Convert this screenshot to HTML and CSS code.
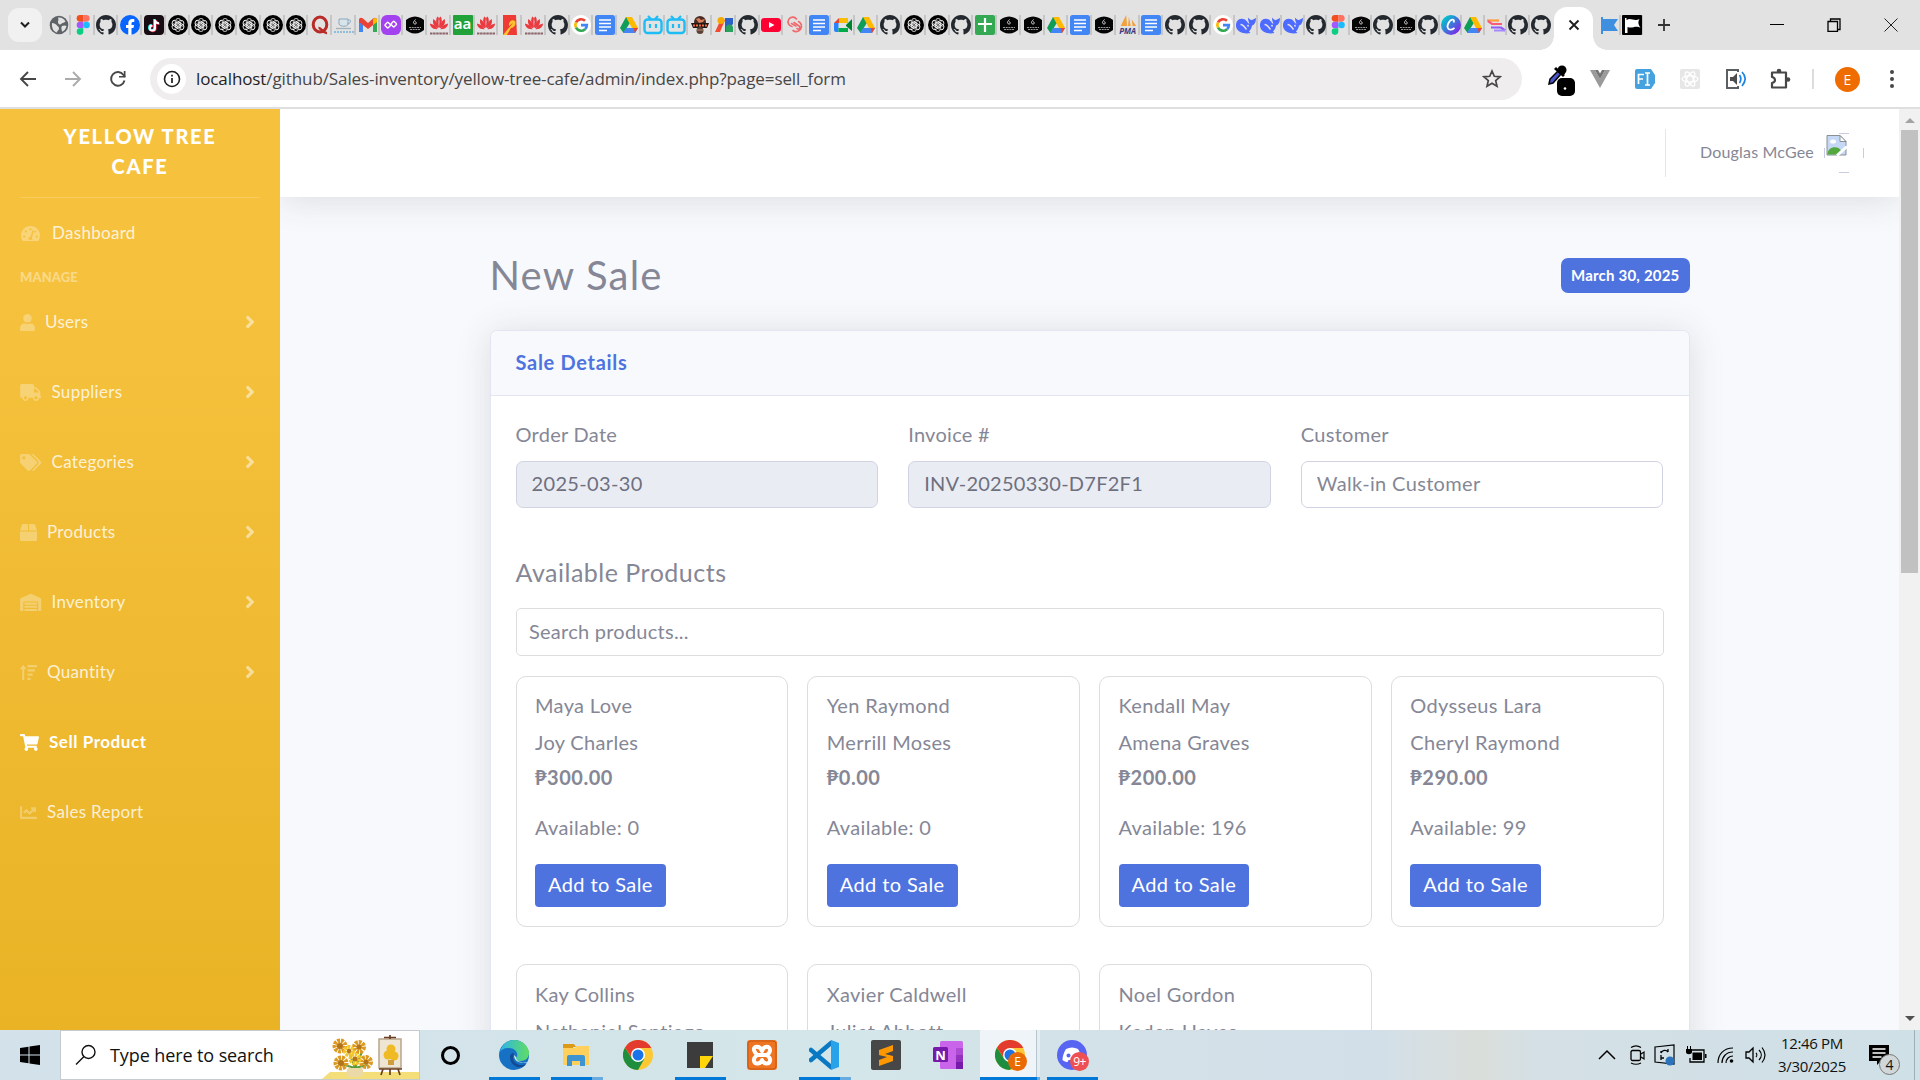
FILE: index.html
```html
<!DOCTYPE html>
<html lang="en">
<head>
<meta charset="utf-8">
<title>New Sale</title>
<link rel="stylesheet" href="styles.css">
</head>
<body>
<svg class="defs" aria-hidden="true">
  <symbol id="github" viewBox="0 0 16 16"><path fill="#24292f" d="M8 0C3.58 0 0 3.58 0 8c0 3.54 2.29 6.53 5.47 7.59.4.07.55-.17.55-.38 0-.19-.01-.82-.01-1.49-2.01.37-2.53-.49-2.69-.94-.09-.23-.48-.94-.82-1.13-.28-.15-.68-.52-.01-.53.63-.01 1.08.58 1.23.82.72 1.21 1.87.87 2.33.66.07-.52.28-.87.51-1.07-1.78-.2-3.64-.89-3.64-3.95 0-.87.31-1.59.82-2.15-.08-.2-.36-1.02.08-2.12 0 0 .67-.21 2.2.82.64-.18 1.32-.27 2-.27s1.36.09 2 .27c1.53-1.04 2.2-.82 2.2-.82.44 1.1.16 1.92.08 2.12.51.56.82 1.27.82 2.15 0 3.07-1.87 3.75-3.65 3.95.29.25.54.73.54 1.48 0 1.07-.01 1.93-.01 2.2 0 .21.15.46.55.38A8.01 8.01 0 0 0 16 8c0-4.42-3.58-8-8-8z"/></symbol>
  <symbol id="globe" viewBox="0 0 20 20"><circle cx="10" cy="10" r="9.300" fill="#5f6368"/><path fill="#e2e2e2" d="M3 8c2 0 4 1 5 2.500s2 1 2 3-2 2-2 4C5 17 2.500 13.500 3 8zM9 2.500c3-.5 6 1 7.500 4-1 1.500-3 1-4.500 2.500s-3-.5-3-2 1-1.500 0-4.500zM13 11c2-1 3.500-.5 4.500 0-.5 3-2.500 5-4.500 5.800 0-2-1.500-4 0-5.800z"/></symbol>
  <symbol id="figma" viewBox="0 0 20 20"><path fill="#f24e1e" d="M7 0h3.300v6.700H7a3.300 3.300 0 0 1 0-6.700z"/><path fill="#ff7262" d="M10.300 0h3a3.300 3.300 0 0 1 0 6.700h-3z"/><path fill="#a259ff" d="M7 6.700h3.300v6.600H7a3.300 3.300 0 0 1 0-6.600z"/><circle cx="13.500" cy="10" r="3.300" fill="#1abcfe"/><path fill="#0acf83" d="M7 13.300h3.300v3.300A3.300 3.300 0 1 1 7 13.300z"/></symbol>
  <symbol id="facebook" viewBox="0 0 20 20"><circle cx="10" cy="10" r="10" fill="#0866ff"/><path fill="#fff" d="M8.300 20v-7H6v-3h2.300V8.500C8.300 5.500 9.700 4 12.500 4c.6 0 1.400.1 1.800.2V7h-1.200c-1.200 0-1.600.5-1.600 1.700V10H14l-.5 3h-2v7z"/></symbol>
  <symbol id="tiktok" viewBox="0 0 20 20"><rect width="20" height="20" rx="4" fill="#170c14"/><g fill="none" stroke-width="2"><path stroke="#25f4ee" d="M10.200 4v8.500A2.600 2.600 0 1 1 7.500 10M10.200 4c0 2 1.500 3.700 4 3.700"/><path stroke="#fe2c55" d="M11.600 5v8.500A2.600 2.600 0 1 1 9 11M11.600 5c0 2 1.500 3.700 4 3.700"/><path stroke="#fff" d="M11 4.500V13a2.600 2.600 0 1 1-2.700-2.600M11 4.500c0 2 1.500 3.700 4 3.700"/></g></symbol>
  <symbol id="gpt" viewBox="0 0 20 20"><circle cx="10" cy="10" r="10" fill="#000"/><g fill="none" stroke="#fff" stroke-width=".9"><path id="petal" d="M7.300 11.500V6.400c0-3.200 4.300-3.700 5.300-1.200M9 9.200l4.500-2.500"/><use href="#petal" transform="rotate(60 10 10)"/><use href="#petal" transform="rotate(120 10 10)"/><use href="#petal" transform="rotate(180 10 10)"/><use href="#petal" transform="rotate(240 10 10)"/><use href="#petal" transform="rotate(300 10 10)"/></g></symbol>
  <symbol id="quora" viewBox="0 0 20 20"><ellipse cx="10" cy="9.500" rx="6.800" ry="7.500" fill="none" stroke="#b92b27" stroke-width="3"/><path d="M8.500 13c3-.5 4 5.500 8.500 5" fill="none" stroke="#b92b27" stroke-width="2.500"/></symbol>
  <symbol id="java" viewBox="0 0 20 20"><path d="M5 4h9v5c0 3-8 3-9 0zM14 5c4-1 3 4-1 4" fill="#d9e3ea" stroke="#8aa9bf"/><path d="M2 13.500h15" stroke="#a3b1bc" stroke-width="1.300"/><path d="M0 17h20" stroke="#72b3dc" stroke-width="1.600" stroke-dasharray="2 1"/></symbol>
  <symbol id="gmail" viewBox="0 0 20 20"><path fill="#4285f4" d="M1 5v12h4V9z"/><path fill="#34a853" d="M15 9v8h4V5z"/><path fill="#ea4335" d="M1 5c0-2 2-3 4-1.500l5 4.500 5-4.500C17 2 19 3 19 5v2l-9 7-9-7z"/><path fill="#fbbc04" d="M15 4c2-2 4-1 4 1v2l-4 3z"/></symbol>
  <symbol id="purple" viewBox="0 0 20 20"><rect width="20" height="20" rx="6" fill="#a243ef"/><g fill="none" stroke="#fff" stroke-width="1.400"><rect x="4.700" y="8" width="4.500" height="4.500" rx="1" transform="rotate(45 7 10)"/><rect x="10.700" y="7" width="4.500" height="4.500" rx="1" transform="rotate(45 13 9)"/></g></symbol>
  <symbol id="badge" viewBox="0 0 20 20"><path d="M4 3c4-2 8-2 12 0l3 2v10l-3 2c-4 2-8 2-12 0l-3-2V5z" fill="#050505"/><path d="M10.500 4.500c-2 2-3 4-.5 4.500 2 0 1.500-2 0-2.500" stroke="#ddd" fill="none"/><path d="M4 12.500h12M5 14.500h10" stroke="#999" stroke-dasharray="2 .7"/></symbol>
  <symbol id="huawei" viewBox="0 0 20 20"><g fill="#ea3a40"><path d="M9.700 13C6 9 7 3 8.500 1.500c2 1 2.500 6 1.200 11.500zM10.300 13c3.700-4 2.700-10 1.200-11.500-2 1-2.500 6-1.200 11.500z"/><path d="M9 13.500C4 11 3.500 7 4.300 4 7 5.500 9 9 9 13.500zM11 13.500c5-2.500 5.500-6.500 4.700-9.500C13 5.500 11 9 11 13.500z"/><path d="M8.500 14.200C3 14.500 1 11 1 8.500c3 .5 6 2.500 7.500 5.700zM11.500 14.200c5.500.3 7.500-3.200 7.500-5.700-3 .5-6 2.500-7.500 5.700z"/></g><path d="M1 18.500h18" stroke="#8a6468" stroke-width="2" stroke-dasharray="2.500 .6"/></symbol>
  <symbol id="wave" viewBox="0 0 20 20"><path fill="#ee3b33" d="M3 0h13l1 20H3z"/><path fill="#f9c22e" d="M3 20 13 8l-4 3c-1-4 3-7 6-5 2 4-2 7-4 7l-4 7z"/></symbol>
  <symbol id="google" viewBox="0 0 20 20"><circle cx="10" cy="10" r="10" fill="#fff"/><g fill="none" stroke-width="2.700"><path stroke="#ea4335" d="M5 7.300A5.800 5.800 0 0 1 14 5.800"/><path stroke="#fbbc05" d="M5 12.700a5.800 5.800 0 0 1 0-5.400"/><path stroke="#34a853" d="M5 12.700a5.800 5.800 0 0 0 9 1.500"/><path stroke="#4285f4" d="M10 10.200h5.800c0 1.800-.7 3-1.800 4"/></g></symbol>
  <symbol id="docs" viewBox="0 0 20 20"><rect width="20" height="20" rx="2.500" fill="#4285f4"/><path d="M4 5h12M4 8.500h12M4 12h12M4 15.500h8" stroke="#fff" stroke-width="1.700"/></symbol>
  <symbol id="drive" viewBox="0 0 20 20"><path fill="#0f9d58" d="M7 2h3l1.500 5L4.500 18 1 13z"/><path fill="#ffba00" d="M7 2h6l6 11h-6z"/><path fill="#4285f4" d="M7 13h12l-3 5H4z"/><path fill="#ea4335" d="m14.500 13 4.500 0-3 5z"/></symbol>
  <symbol id="bili" viewBox="0 0 20 20"><rect x="1.500" y="4.500" width="17" height="13.500" rx="3" fill="none" stroke="#1dbcf5" stroke-width="2.400"/><path d="m5 1 3 3M15 1l-3 3M7 9v4M13 9v4" stroke="#1dbcf5" stroke-width="2.200"/></symbol>
  <symbol id="ninja" viewBox="0 0 20 20"><circle cx="10" cy="7" r="6" fill="#4b2a21"/><path fill="#d9825c" d="m6 4 3-1 2 2 4-1-2 3-4 1z"/><path d="M1 8h18l-2 5H3z" fill="#201817"/><path d="M3 10.500h14" stroke="#f07040" stroke-width="1.800" stroke-dasharray="2 1"/><circle cx="10" cy="15.500" r="3.500" fill="#5b4035"/><path d="M7 15h6" stroke="#b98c7a"/></symbol>
  <symbol id="xshape" viewBox="0 0 20 20"><path fill="#f34b32" d="M1 17 7 4l4 1-5 12z"/><circle cx="7" cy="5.500" r="3.500" fill="#f7a900"/><path fill="#2a62c9" d="M11 3h8v6l-3 3 3 5h-8z"/><path fill="#29a15c" d="M12 13a3 3 0 0 1 7 0v4h-7z"/></symbol>
  <symbol id="youtube" viewBox="0 0 20 20"><rect y="3" width="20" height="14" rx="3.500" fill="#f03"/><path fill="#fff" d="m8 7 5.500 3L8 13z"/></symbol>
  <symbol id="swirl" viewBox="0 0 20 20"><g fill="none" stroke="#f1686b" stroke-width="1.600" stroke-linecap="round"><path d="M11 11 6.500 8.500M7 11.500a4.700 4.700 0 1 1 4.500-7.500"/><path d="m9 7.500 5 3.500c2 1.500 0 4-2 2.500M13.500 6.500a5.300 5.300 0 1 1-5.500 9"/></g></symbol>
  <symbol id="meet" viewBox="0 0 20 20"><path fill="#ea4335" d="m1 8 5-5v5z"/><path fill="#fbbc04" d="M6 3h9v5H6z"/><path fill="#2684fc" d="M1 8h4.500v9H3a2 2 0 0 1-2-2z"/><path fill="#00ac47" d="M5.500 13H15v4H5.500z"/><path fill="#00832d" d="m13 10 6-6v12l-6-5z"/></symbol>
  <symbol id="sheet" viewBox="0 0 20 20"><rect width="20" height="20" rx="2" fill="#34a853"/><path d="M10 3v14M3 9h14" stroke="#fff" stroke-width="2.200"/></symbol>
  <symbol id="sails" viewBox="0 0 20 12"><path fill="#f3a13c" d="M8 0 9 12H2zM11 2l2 10h-3zM14 5l5 7h-4z"/></symbol>
  <symbol id="whale" viewBox="0 0 20 20"><path fill="#4d6bfe" d="M0 9c1-5 5-6 9-4.500 2 1.500 3 4 4.500 4.500C13 7 12 6 12 2.500c1.500 2 3 2.500 4 2.500l4-2c0 4-1.500 7-4 7.500-.5 3-1.500 4.500-3 6l1.500 1.500C8 19.500-1 17 0 9z"/><path d="M4.500 9.500c2.500 0 4 2 6 5M11.500 10l1 1.500" stroke="#e2e2e2" stroke-width="1.400" fill="none"/></symbol>
  <linearGradient id="cg" x1="0" y1="0" x2="1" y2="1"><stop offset=".15" stop-color="#00c4cc"/><stop offset=".85" stop-color="#7d2ae8"/></linearGradient>
  <symbol id="canva" viewBox="0 0 20 20"><circle cx="10" cy="10" r="10" fill="url(#cg)"/><path fill="none" stroke="#fff" stroke-width="1.800" d="M12.500 7.500C14.500 4 10 3 7.500 8S8 17 13.500 13"/></symbol>
  <symbol id="stripes" viewBox="0 0 20 20"><path fill="none" stroke-width="2.200" d="M1 5.500h12" stroke="#ff9c3a"/><path fill="none" stroke-width="2.200" d="M2 6l4 3h10" stroke="#fb5b77"/><path fill="none" stroke-width="2.200" d="M5 12.500h10l4 3" stroke="#8e5bf5"/><path d="M8 15.500h11" fill="none" stroke-width="2" stroke="#a58bff"/></symbol>
  <symbol id="flagb" viewBox="0 0 20 20"><path fill="#3f8fe0" d="M2 2h2v2h15l-4 6 4 6H4v3H2z"/></symbol>
  <symbol id="flagk" viewBox="0 0 20 20"><rect width="20" height="20" rx="1" fill="#000"/><path fill="#fff" d="M3 3h1.500v2c5-3 7 2 13-1-2 4-1 5 1 9-5-3-8 1-13-1v6H3z"/></symbol>

  <symbol id="dash" viewBox="0 0 576 512"><path fill-rule="evenodd" d="M288 32C129 32 0 161 0 320c0 53 14 102 39 145 6 10 16 15 28 15h442c12 0 22-5 28-15 25-43 39-92 39-145C576 161 447 32 288 32zm0 64a32 32 0 1 1 0 64 32 32 0 0 1 0-64zM96 384a32 32 0 1 1 0-64 32 32 0 0 1 0 64zm48-160a32 32 0 1 1 0-64 32 32 0 0 1 0 64zm248-37-66 199c16 14 26 38 14 62H226c-18-52 18-96 62-96l60-180c10-24 48-12 44 15zM432 224c-10 0-20-5-26-13l10-30c14-14 48 0 48 11a32 32 0 0 1-32 32zm48 160a32 32 0 1 1 0-64 32 32 0 0 1 0 64z"/></symbol>
  <symbol id="user" viewBox="0 0 448 512"><path d="M224 256c70.7 0 128-57.3 128-128S294.7 0 224 0 96 57.3 96 128s57.3 128 128 128zm89.6 32h-16.7c-22.2 10.2-46.9 16-72.9 16s-50.6-5.8-72.9-16h-16.7C60.2 288 0 348.2 0 422.4V464c0 26.5 21.5 48 48 48h352c26.5 0 48-21.5 48-48v-41.6c0-74.2-60.2-134.4-134.4-134.4z"/></symbol>
  <symbol id="truck" viewBox="0 0 640 512"><path d="M624 352h-16V243.900c0-12.700-5.100-24.900-14.100-33.900L494 110.100c-9-9-21.200-14.100-33.900-14.100H416V48c0-26.500-21.500-48-48-48H48C21.500 0 0 21.500 0 48v320c0 26.500 21.500 48 48 48h16c0 53 43 96 96 96s96-43 96-96h128c0 53 43 96 96 96s96-43 96-96h48c8.800 0 16-7.200 16-16v-32c0-8.800-7.200-16-16-16zM160 464c-26.500 0-48-21.500-48-48s21.500-48 48-48 48 21.500 48 48-21.500 48-48 48zm320 0c-26.500 0-48-21.500-48-48s21.500-48 48-48 48 21.500 48 48-21.500 48-48 48zm80-208H416V144h44.100l99.900 99.900V256z"/></symbol>
  <symbol id="tags" viewBox="0 0 640 512"><path d="M497.941 225.941L286.059 14.059A48 48 0 0 0 252.118 0H48C21.490 0 0 21.490 0 48v204.118a48 48 0 0 0 14.059 33.941l211.882 211.882c18.744 18.745 49.136 18.746 67.882 0l204.118-204.118c18.745-18.745 18.745-49.137 0-67.882zM112 160c-26.510 0-48-21.490-48-48s21.490-48 48-48 48 21.490 48 48-21.490 48-48 48zm513.941 133.823L421.823 497.941c-18.745 18.745-49.137 18.745-67.882 0l-.36-.36L527.640 323.522c16.999-16.999 26.360-39.600 26.360-63.640s-9.362-46.641-26.360-63.640L331.397 0h48.721a48 48 0 0 1 33.941 14.059l211.882 211.882c18.745 18.745 18.745 49.137 0 67.882z"/></symbol>
  <symbol id="box" viewBox="0 0 512 512"><path d="M509.500 184.600L458.900 32.800C452.400 13.200 434.100 0 413.400 0H272v192h238.700c-.4-2.500-.4-5-1.200-7.400zM240 0H98.600c-20.700 0-39 13.200-45.500 32.800L2.500 184.600c-.8 2.400-.8 4.900-1.200 7.400H240V0zM0 224v240c0 26.500 21.500 48 48 48h416c26.500 0 48-21.500 48-48V224H0z"/></symbol>
  <symbol id="warehouse" viewBox="0 0 640 512"><path d="M504 352H136.400c-4.400 0-8 3.600-8 8l-.1 48c0 4.400 3.600 8 8 8H504c4.400 0 8-3.600 8-8v-48c0-4.400-3.600-8-8-8zm0 96H136.100c-4.400 0-8 3.600-8 8l-.1 48c0 4.400 3.600 8 8 8h368c4.400 0 8-3.600 8-8v-48c0-4.400-3.600-8-8-8zm0-192H136.600c-4.400 0-8 3.600-8 8l-.1 48c0 4.400 3.600 8 8 8H504c4.400 0 8-3.600 8-8v-48c0-4.400-3.600-8-8-8zm106.500-139L338.400 3.700a48.150 48.150 0 0 0-36.900 0L29.500 117C11.700 124.500 0 141.900 0 161.300V504c0 4.400 3.600 8 8 8h80c4.400 0 8-3.600 8-8V256c0-17.600 14.600-32 32.600-32h382.800c18 0 32.600 14.400 32.600 32v248c0 4.400 3.600 8 8 8h80c4.400 0 8-3.600 8-8V161.300c0-19.400-11.700-36.800-29.500-44.300z"/></symbol>
  <symbol id="sort" viewBox="0 0 512 512"><path d="M16 160h48v304c0 9 7 16 16 16h32c9 0 16-7 16-16V160h48c14 0 21-17 11-27l-80-96c-6-7-16-7-22 0L5 133c-10 10-3 27 11 27zM240 32h256c9 0 16 7 16 16v32c0 9-7 16-16 16H240c-9 0-16-7-16-16V48c0-9 7-16 16-16zM240 160h192c9 0 16 7 16 16v32c0 9-7 16-16 16H240c-9 0-16-7-16-16v-32c0-9 7-16 16-16zM240 288h128c9 0 16 7 16 16v32c0 9-7 16-16 16H240c-9 0-16-7-16-16v-32c0-9 7-16 16-16zM240 416h64c9 0 16 7 16 16v32c0 9-7 16-16 16h-64c-9 0-16-7-16-16v-32c0-9 7-16 16-16z"/></symbol>
  <symbol id="cart" viewBox="0 0 576 512"><path d="M528.120 301.319l47.273-208C578.806 78.301 567.391 64 551.990 64H159.208l-9.166-44.810C147.758 8.021 137.930 0 126.529 0H24C10.745 0 0 10.745 0 24v16c0 13.255 10.745 24 24 24h69.883l70.248 343.435C147.325 417.100 136 435.222 136 456c0 30.928 25.072 56 56 56s56-25.072 56-56c0-15.674-6.447-29.835-16.824-40h209.647C430.447 426.165 424 440.326 424 456c0 30.928 25.072 56 56 56s56-25.072 56-56c0-22.172-12.888-41.332-31.579-50.405l5.517-24.276c3.413-15.018-8.002-29.319-23.403-29.319H218.117l-6.545-32h293.145c11.206 0 20.920-7.754 23.403-18.681z"/></symbol>
  <symbol id="chart" viewBox="0 0 512 512"><path d="M496 384H64V80c0-8.840-7.160-16-16-16H16C7.160 64 0 71.160 0 80v336c0 17.670 14.330 32 32 32h464c8.840 0 16-7.160 16-16v-32c0-8.840-7.160-16-16-16zM464 96H345.940c-21.380 0-32.090 25.850-16.970 40.970l32.400 32.400L288 242.750l-73.370-73.370c-12.500-12.500-32.760-12.500-45.250 0l-68.690 68.690c-6.250 6.250-6.250 16.380 0 22.630l22.620 22.620c6.250 6.250 16.380 6.250 22.630 0L192 237.250l73.370 73.370c12.500 12.500 32.760 12.500 45.250 0l96-96 32.400 32.400c15.120 15.120 40.970 4.410 40.970-16.970V112c.01-8.840-7.150-16-15.990-16z"/></symbol>
  <symbol id="angle" viewBox="0 0 256 512"><path d="M224.300 273l-136 136c-9.400 9.400-24.600 9.400-33.900 0l-22.600-22.600c-9.400-9.400-9.400-24.600 0-33.900l96.400-96.400-96.400-96.400c-9.400-9.400-9.400-24.600 0-33.900L54.300 103c9.400-9.400 24.600-9.400 33.900 0l136 136c9.500 9.400 9.500 24.600.1 34z"/></symbol>
  <symbol id="chrome" viewBox="0 0 30 30"><circle cx="15" cy="15" r="15" fill="#fcc934"/><path fill="#1e8e3e" d="M2 7.500A15 15 0 0 0 15 30l6.500-11.500-12.500 0z"/><path fill="#e33b2e" d="M2 7.500 9 18 15 8h13.300A15 15 0 0 0 2 7.500z"/><circle cx="15" cy="15" r="7" fill="#fff"/><circle cx="15" cy="15" r="5.500" fill="#1a73e8"/></symbol>
</svg>

<header class="tabstrip">
  <button class="tab-search" aria-label="Search tabs"><svg width="12" height="8" viewBox="0 0 12 8"><path d="m2 1.500 4 4 4-4" fill="none" stroke="#1f1f1f" stroke-width="2"/></svg></button>
  <div class="tabs tabs-wide" id="tabs-wide"></div>
  <div class="tabs tabs-narrow" id="tabs-narrow"></div>
  <div class="tab-active"><svg width="12" height="12" viewBox="0 0 12 12"><path d="m1.500 1.500 9 9m0-9-9 9" stroke="#1f1f1f" stroke-width="1.900"/></svg></div>
  <div class="tabs tabs-narrow" id="tabs-after"></div>
  <button class="tab-new" aria-label="New tab"><svg width="14" height="14" viewBox="0 0 14 14"><path d="M7 1v12M1 7h12" stroke="#333" stroke-width="1.800"/></svg></button>
  <div class="window-controls">
    <svg width="14" height="14" viewBox="0 0 14 14"><path d="M0 6.500h14" stroke="#000"/></svg>
    <svg width="14" height="14" viewBox="0 0 14 14"><path d="M1 3.500h9.500v10H1zM3.500 3V1H13v10.500h-2" fill="none" stroke="#000" stroke-width="1.300"/></svg>
    <svg width="14" height="14" viewBox="0 0 14 14"><path d="m.5.500 13 13m0-13-13 13" stroke="#222"/></svg>
  </div>
</header>

<div class="toolbar">
  <div class="nav-buttons">
    <svg width="18" height="18" viewBox="0 0 18 18"><path d="M17 9H2m7-7L2 9l7 7" fill="none" stroke="#474747" stroke-width="1.900"/></svg>
    <svg width="18" height="18" viewBox="0 0 18 18"><path d="M1 9h15M9 2l7 7-7 7" fill="none" stroke="#ababab" stroke-width="1.900"/></svg>
    <svg width="18" height="18" viewBox="0 0 18 18"><path d="M15.500 10.500A6.800 6.800 0 1 1 14.500 5L16 7" fill="none" stroke="#474747" stroke-width="1.900"/><path d="M16.500 1v6.500H10V6h4.800V1z" fill="#474747"/></svg>
  </div>
  <div class="address">
    <span class="site-info"><svg width="18" height="18" viewBox="0 0 18 18"><circle cx="9" cy="9" r="7.500" fill="none" stroke="#1f1f1f" stroke-width="1.600"/><path d="M9 8v5M9 4.800v1.800" stroke="#1f1f1f" stroke-width="1.700"/></svg></span>
    <span class="url"><b>localhost</b>/github/Sales-inventory/yellow-tree-cafe/admin/index.php?page=sell_form</span>
    <svg class="star" width="20" height="20" viewBox="0 0 20 20"><path d="m10 2 2.300 5.300 5.700.5-4.300 3.800 1.300 5.600-5-3-5 3 1.300-5.600L2 7.800l5.700-.5z" fill="none" stroke="#474747" stroke-width="1.700"/></svg>
  </div>
  <div class="extensions">
    <svg width="30" height="30" viewBox="0 0 30 30"><path fill="#4a55c8" stroke="#000" stroke-width="1.500" d="m4 20 1-5 8-8 3 3-8 9z"/><path d="m10 4 9 8" stroke="#000" stroke-width="3"/><circle cx="17" cy="6" r="4.500" fill="#000"/><rect x="12" y="14" width="18" height="18" rx="5" fill="#000"/><circle cx="20" cy="24.500" r="1.300" fill="#fff"/></svg>
    <svg width="22" height="22" viewBox="0 0 22 22"><path fill="#9a9a9a" d="M1 2h5l5 9 5-9h5L11 20z"/><path fill="#737373" d="M6 2h3l2 3.500L13 2h3l-5 9z"/></svg>
    <svg width="22" height="22" viewBox="0 0 22 22"><path fill="#45a2df" d="M3 1h14l4 6v8l-4 6H3a2 2 0 0 1-2-2V3a2 2 0 0 1 2-2z"/><path d="M4.500 16V6.500H10M4.500 11H9M11 5h5M13.500 5v12M11 17h5" fill="none" stroke="#fff" stroke-width="1.700"/></svg>
    <svg width="22" height="22" viewBox="0 0 22 22"><rect x="1" y="1" width="20" height="20" rx="2" fill="#e6e6e6"/><g fill="none" stroke="#fff" stroke-width="1.300"><ellipse cx="11" cy="11" rx="8" ry="3.200"/><ellipse cx="11" cy="11" rx="8" ry="3.200" transform="rotate(60 11 11)"/><ellipse cx="11" cy="11" rx="8" ry="3.200" transform="rotate(120 11 11)"/></g></svg>
    <svg width="22" height="22" viewBox="0 0 22 22"><path d="M14 4V2H3v18h11v-2" fill="none" stroke="#5a5f63" stroke-width="2"/><path fill="#4d4d4d" d="M6 9h3l4-4v12l-4-4H6z"/><path d="M15.500 7c2 3 2 5 0 8M18 4c4 4 4 9 0 14" fill="none" stroke="#1a82e2" stroke-width="1.700"/></svg>
    <svg width="22" height="22" viewBox="0 0 22 22"><path d="M3 4.500h14v15H3V15c4-1 4-5 0-6z" fill="none" stroke="#474747" stroke-width="2.200" stroke-linejoin="round"/><circle cx="10" cy="3" r="2.300" fill="#474747"/><circle cx="19" cy="11.500" r="2.300" fill="#474747"/></svg>
  </div>
  <span class="toolbar-divider"></span>
  <span class="profile">E</span>
  <span class="menu-dots"><i></i><i></i><i></i></span>
</div>

<div class="viewport">
  <nav class="sidebar">
    <a class="brand">YELLOW TREE<br>CAFE</a>
    <hr class="side-rule">
    <a class="item wide-icon"><svg class="i576"><use href="#dash"/></svg><span>Dashboard</span></a>
    <div class="side-heading">MANAGE</div>
    <a class="item"><svg class="i448"><use href="#user"/></svg><span>Users</span><svg class="chev"><use href="#angle"/></svg></a>
    <a class="item"><svg class="i640"><use href="#truck"/></svg><span>Suppliers</span><svg class="chev"><use href="#angle"/></svg></a>
    <a class="item"><svg class="i640"><use href="#tags"/></svg><span>Categories</span><svg class="chev"><use href="#angle"/></svg></a>
    <a class="item"><svg class="i512"><use href="#box"/></svg><span>Products</span><svg class="chev"><use href="#angle"/></svg></a>
    <a class="item"><svg class="i640"><use href="#warehouse"/></svg><span>Inventory</span><svg class="chev"><use href="#angle"/></svg></a>
    <a class="item"><svg class="i512"><use href="#sort"/></svg><span>Quantity</span><svg class="chev"><use href="#angle"/></svg></a>
    <a class="item active"><svg class="i576"><use href="#cart"/></svg><span>Sell Product</span></a>
    <a class="item"><svg class="i512"><use href="#chart"/></svg><span>Sales Report</span></a>
  </nav>

  <main class="main">
    <div class="topbar">
      <span class="topbar-divider"></span>
      <span class="username">Douglas McGee</span>
      <svg class="avatar" width="40" height="40" viewBox="0 0 40 40"><path d="M15 .5h10M15 39.500h10M39.500 15v10M.5 15v10" stroke="#c9cce0"/><path fill="#c5d8f5" stroke="#8a8f94" d="M3 2.500h13l6 6V22H3z"/><path fill="#fff" stroke="#8a8f94" d="M16 2.500v6h6z"/><ellipse cx="9" cy="8.500" rx="3" ry="2" fill="#fff"/><path fill="#53a93f" d="M3.500 21.500c0-9 12-9 14-3l-4 3z"/><path d="m13 22.500 10-9" stroke="#fff" stroke-width="3"/></svg>
    </div>

    <div class="content">
      <div class="page-head">
        <h1>New Sale</h1>
        <span class="date-badge">March 30, 2025</span>
      </div>

      <section class="card">
        <h6 class="card-header">Sale Details</h6>
        <div class="card-body">
          <div class="fields">
            <label>Order Date<span class="input readonly">2025-03-30</span></label>
            <label>Invoice #<span class="input readonly inv">INV-20250330-D7F2F1</span></label>
            <label>Customer<span class="input placeholder">Walk-in Customer</span></label>
          </div>
          <h5>Available Products</h5>
          <div class="search">Search products...</div>
          <div class="products">
            <article class="product"><p>Maya Love</p><p class="type">Joy Charles</p><p class="price">₱300.00</p><p class="stock">Available: 0</p><button>Add to Sale</button></article>
            <article class="product"><p>Yen Raymond</p><p class="type">Merrill Moses</p><p class="price">₱0.00</p><p class="stock">Available: 0</p><button>Add to Sale</button></article>
            <article class="product"><p>Kendall May</p><p class="type">Amena Graves</p><p class="price">₱200.00</p><p class="stock">Available: 196</p><button>Add to Sale</button></article>
            <article class="product"><p>Odysseus Lara</p><p class="type">Cheryl Raymond</p><p class="price">₱290.00</p><p class="stock">Available: 99</p><button>Add to Sale</button></article>
            <article class="product"><p>Kay Collins</p><p class="type">Nathaniel Santiago</p></article>
            <article class="product"><p>Xavier Caldwell</p><p class="type">Juliet Abbott</p></article>
            <article class="product"><p>Noel Gordon</p><p class="type">Kaden Hayes</p></article>
          </div>
        </div>
      </section>
    </div>
  </main>

  <div class="scrollbar">
    <svg width="10" height="5" viewBox="0 0 10 5"><path d="M0 5 5 0l5 5z" fill="#a3a3a3"/></svg>
    <span class="thumb"></span>
    <svg width="10" height="5" viewBox="0 0 10 5"><path d="m0 0 5 5 5-5z" fill="#505050"/></svg>
  </div>
</div>

<footer class="taskbar">
  <div class="start"><svg width="20" height="20" viewBox="0 0 20 20"><path d="M0 3l8.500-1.300v7.800H0zM9.500 1.500 20 0v9.500H9.500zM0 10.500h8.500v7.800L0 17zM9.500 10.500H20V20L9.500 18.500z"/></svg></div>
  <div class="task-search">
    <svg width="22" height="22" viewBox="0 0 22 22"><circle cx="13.500" cy="8" r="6.500" fill="none" stroke="#111" stroke-width="1.400"/><path d="m9 12.500-8 8" stroke="#111" stroke-width="1.500"/></svg>
    <span>Type here to search</span>
    <svg class="art" width="97" height="48" viewBox="0 0 97 48">
      <path fill="#f3de7a" d="M8 41h89v7H0z"/>
      <path fill="none" stroke="#5a9a3f" stroke-width="2" d="m33 37-7-18m7 18 7-16m-7 16-14-4m14 4 12-3"/>
      <path fill="#ecd9a8" d="M26 37h14c3 5 0 9-3 9h-8c-4 0-6-4-3-9z"/>
      <g fill="none" stroke="#dc9a20" stroke-width="5" stroke-dasharray="2.600 .8"><circle cx="18" cy="15" r="5"/><circle cx="37" cy="16" r="4.500"/><circle cx="19" cy="32" r="5"/><circle cx="44" cy="31" r="4.500"/></g>
      <g fill="none" stroke="#f5c62c" stroke-width="4" stroke-dasharray="2.600 .8"><circle cx="27" cy="20" r="4"/><circle cx="33" cy="28" r="4.500"/></g>
      <g fill="#b5741a"><circle cx="18" cy="15" r="3"/><circle cx="37" cy="16" r="2.500"/><circle cx="19" cy="32" r="3"/><circle cx="44" cy="31" r="2.500"/><circle cx="27" cy="20" r="2.200"/><circle cx="33" cy="28" r="2.500"/></g>
      <path fill="#eee6d2" stroke="#b9a58c" stroke-width="1.500" d="M57 8h22v29H57z"/>
      <g fill="#efba24"><circle cx="69" cy="18" r="4.500"/><circle cx="66" cy="24" r="4.500"/><circle cx="72" cy="25" r="4.500"/></g><path fill="#cf9d3f" d="M66 29h6v5h-6z"/>
      <path d="M68 4v4M57 38h23M61 38l-2 6M76 38l2 6M68 38v6M62 6.500h12" stroke="#6b3f24" stroke-width="1.700"/>
    </svg>
  </div>
  <div class="cortana"><span></span></div>
  <div class="apps">
    <div class="app running"><svg width="30" height="30" viewBox="0 0 30 30"><linearGradient id="eg" x1="0" x2="1"><stop offset="0" stop-color="#2fb4e8"/><stop offset="1" stop-color="#5fdd63"/></linearGradient><circle cx="15" cy="15" r="15" fill="#1671c4"/><path fill="url(#eg)" d="M1 12C3 4 9 0 15 0c9 0 15 7 15 13 0 5-4 8-8 8-4 0-6-1-5-3 4-5-2-11-8-10-4 0-7 2-8 4z"/><path fill="#124a94" d="M11 17c0 6 5 11 11 10 2 0 4-1 5-3-6 3-13-1-13-6l1-5c-3 0-4 2-4 4z"/><path fill="#d5e3e9" d="M15 15c0 6 5 9 13 7l1 1-3-1c-6 1-9-2-9-5z"/></svg></div>
    <div class="app running stacked"><svg width="28" height="24" viewBox="0 0 28 24"><path fill="#dd9a18" d="M1 1h11l2 3h-3v6H1z"/><path fill="#ffd15c" d="M1 5h12l1-2h13v19H1z"/><path fill="#3e94d1" d="M5 23v-9a2 2 0 0 1 2-2h14a2 2 0 0 1 2 2v9h-5v-5h-8v5z"/></svg></div>
    <div class="app"><svg width="30" height="30"><use href="#chrome"/></svg></div>
    <div class="app running"><svg width="28" height="28" viewBox="0 0 28 28"><rect x="1" y="1" width="26" height="26" fill="#3c3c3c"/><path fill="#ffd60a" d="M14 15h13L19 27h-5z"/></svg></div>
    <div class="app"><svg width="30" height="30" viewBox="0 0 30 30"><rect width="30" height="30" rx="3" fill="#ee7421"/><rect x="1" y="1" width="28" height="28" rx="3" fill="none" stroke="#c55713" stroke-width="1"/><path fill="none" stroke="#fff" stroke-width="4" stroke-linejoin="round" d="M15 11c-2-6-9-5-8-1s3 4 3 5-4 2-3 6 7 3 8-1c1 4 7 5 8 1s-3-5-3-6 3-1 3-5-6-5-8 1zM10 15h10"/></svg></div>
    <div class="app running stacked"><svg width="30" height="30" viewBox="0 0 30 30"><path d="M2 10 22 27M2 20 22 3" stroke="#0a79c4" stroke-width="4.500" stroke-linecap="round"/><path fill="#28a2e8" d="m22 0 8 3v24l-8 3z"/></svg></div>
    <div class="app"><svg width="30" height="30" viewBox="0 0 30 30"><rect width="30" height="30" rx="2" fill="#474747"/><path fill="#ff9800" d="m8 10 14-5v6l-8 3 8 2v5L8 26v-6l8-3-8-2z"/></svg></div>
    <div class="app"><svg width="30" height="30" viewBox="0 0 30 30"><rect x="7" y="1" width="23" height="28" rx="1.500" fill="#ca64ea"/><path fill="#ae4bd5" d="M23 8h7v7h-7z"/><path fill="#9332bf" d="M23 15h7v7h-7z"/><path fill="#7719aa" d="M23 22h7v7h-7z"/><rect y="7" width="15" height="15" rx="1.500" fill="#7719aa"/><text x="7.500" y="19.500" text-anchor="middle" class="t-n">N</text></svg></div>
    <div class="app running focused stacked"><svg width="30" height="30"><use href="#chrome"/></svg><span class="pin orange">E</span></div>
    <div class="app running"><svg width="30" height="30" viewBox="0 0 30 30"><circle cx="15" cy="15" r="15" fill="#5865f2"/><path fill="#fff" d="M9 9c4-2 8-2 12 0 2 3 3.500 7 3.500 11-2 1.500-3 2-5 2l-1-2h-7l-1 2c-2 0-3-.5-5-2 0-4 1.500-8 3.500-11z"/><circle cx="11.500" cy="15.500" r="2" fill="#5865f2"/><circle cx="18.500" cy="15.500" r="2" fill="#5865f2"/></svg><span class="pin red">9+</span></div>
  </div>
  <div class="tray">
    <svg width="18" height="20" viewBox="0 0 18 20"><path d="m1 14 8-8 8 8" fill="none" stroke="#000" stroke-width="1.500"/></svg>
    <svg width="20" height="20" viewBox="0 0 20 20"><rect x="4" y="5.500" width="9.500" height="10" rx="1.500" fill="none" stroke="#000" stroke-width="1.300"/><path d="m14 9 3-2v7l-3-2M4 2.500c3-2 7-2 10 0M4 18c3 1.500 7 1.500 10 0" fill="none" stroke="#000" stroke-width="1.200"/></svg>
    <svg width="22" height="22" viewBox="0 0 22 22"><path d="M1 3 20 1v19L1 18z" fill="none" stroke="#000" stroke-width="1.200"/><path d="M14 8a4 4 0 0 0-7 1V7m7 1V5M7 14h3M7 11v5" fill="none" stroke="#000" stroke-width="1.300"/><circle cx="16" cy="17" r="4.500" fill="#2c73bd"/></svg>
    <svg width="22" height="20" viewBox="0 0 22 20"><path d="M7 5h12v12H5v-4" fill="none" stroke="#000" stroke-width="1.300"/><path d="M7.500 7.500h9.500v7.500H7.500zM20 9h1.500v4H20zM1 4h6v3c0 3-6 3-6 0zM2 1h1v3H2zM5 1h1v3H5z"/></svg>
    <svg width="20" height="20" viewBox="0 0 20 20"><g fill="none" stroke="#000" stroke-width="1.200"><path d="M2 18C2 9 8 3 17 3M6 18c0-6 4-11 11-11M10 18c0-4 3-7 7-7"/></g><circle cx="15.500" cy="16" r="1.800"/></svg>
    <svg width="22" height="20" viewBox="0 0 22 20"><path d="M1 7h3l4-4v14l-4-4H1z" fill="none" stroke="#000" stroke-width="1.300"/><path d="M11 8c1 1 1 3 0 4M14 5c3 3 3 7 0 10M17 2.500c4 5 4 10 0 15" fill="none" stroke="#000" stroke-width="1.200"/></svg>
  </div>
  <div class="clock"><span>12:46 PM</span><span>3/30/2025</span></div>
  <div class="notify"><svg width="20" height="20" viewBox="0 0 20 20"><path d="M0 0h20v16h-8l-4 4v-4H0z"/><path d="M3.500 4h13M3.500 8h13M3.500 12h9" stroke="#fff" stroke-width="1.500"/></svg><span class="count">4</span></div>
  <span class="show-desktop"></span>
</footer>
<script src="tabs.js"></script>
</body>
</html>
```
FILE: styles.css
```css
* { box-sizing: border-box; }
body {
  margin: 0;
  width: 1920px;
  height: 1080px;
  display: flex;
  flex-direction: column;
  overflow: hidden;
  font-family: Lato, "Noto Sans", sans-serif;
  font-size: 20px;
  line-height: 30px;
  color: #858796;
  background: #fff;
}
button { font: inherit; border: 0; padding: 0; background: none; color: inherit; }
svg { display: block; flex: none; }
h1, h5, h6, p { margin: 0; font-weight: 400; }
.defs { position: absolute; width: 0; height: 0; }
.t-n { font: 700 13px "Open Sans", sans-serif; fill: #fff; }

/* tab strip */
.tabstrip { flex: none; height: 50px; background: #e2e2e2; display: flex; align-items: center; padding-left: 8px; }
.tab-search { width: 34px; height: 34px; border-radius: 11px; background: #f1f1f1; display: flex; align-items: center; justify-content: center; margin-right: 5px; }
.tabs { display: flex; height: 20px; }
.tab { display: flex; justify-content: center; align-items: center; height: 20px; border-right: 2px solid #c6c6c6; }
.tabs-wide .tab { width: 23.75px; }
.tabs-narrow .tab { width: 22.5px; }
.tab svg { width: 20px; height: 20px; margin-right: -2px; }
.tabs-narrow .tab:last-child { border-color: transparent; }
#tabs-after .tab:last-child { border-color: #c6c6c6; }
.tab-aa { width: 20px; height: 20px; margin-right: -2px; border-radius: 1px; background: #20a13a; color: #fff; font: 600 15px/17px "Noto Sans", sans-serif; text-align: center; }
.tab-pma { display: flex; flex-direction: column; align-items: center; width: 20px; margin-right: -2px; font: italic 700 8px/9px "Noto Sans", sans-serif; color: #3a3b80; }
.tab-pma svg { height: 11px; margin: 0; }
.tab-active { position: relative; width: 39px; height: 43px; margin: 7px 5px 0 2px; border-radius: 13px 13px 0 0; background: #fff; display: flex; align-items: center; justify-content: center; padding-bottom: 7px; }
.tab-active::before, .tab-active::after { content: ""; position: absolute; bottom: 0; width: 14px; height: 14px; }
.tab-active::before { left: -14px; background: radial-gradient(circle at 0 0, transparent 13.500px, #fff 14px); }
.tab-active::after { right: -14px; background: radial-gradient(circle at 100% 0, transparent 13.500px, #fff 14px); }
.tab-new { margin-left: 14px; }
.window-controls { margin-left: auto; display: flex; gap: 43px; padding-right: 22px; }

/* toolbar */
.toolbar { flex: none; height: 59px; display: flex; align-items: center; padding: 1px 24px 0 19px; border-bottom: 2px solid #dfdfdf; background: #fff; }
.nav-buttons { display: flex; gap: 27px; width: 131px; }
.address { display: flex; align-items: center; width: 1372px; height: 42px; border-radius: 21px; background: #efedee; padding: 0 20px 0 7px; }
.site-info { width: 29px; height: 30px; border-radius: 50%; background: #fff; display: flex; align-items: center; justify-content: center; margin-right: 10px; }
.url { font: 17px/30px "Open Sans", sans-serif; letter-spacing: -.1px; color: #474747; }
.url b { font-weight: 400; color: #1f1f1f; }
.star { margin-left: auto; }
.extensions { display: flex; align-items: center; gap: 23px; padding-left: 23px; }
.extensions svg { overflow: visible; }
.extensions svg:first-child { margin-right: -9px; }
.toolbar-divider { width: 2px; height: 20px; background: #dcdcdc; margin-left: 21px; }
.profile { width: 25px; height: 25px; border-radius: 50%; background: #ef6c00; color: #fff; font: 14px/25px "Open Sans", sans-serif; text-align: center; margin-left: 21px; }
.menu-dots { display: flex; flex-direction: column; gap: 3px; margin-left: auto; margin-right: 2px; }
.menu-dots i { width: 4px; height: 4px; border-radius: 50%; background: #474747; }

/* page */
.viewport { flex: none; height: 921px; display: flex; overflow: hidden; }
.sidebar { flex: none; width: 280px; padding: 12px 20px 0; background: linear-gradient(180deg, #f6c23e 18%, #e9b325 100%); }
.brand { display: block; text-align: center; color: #fff; font-weight: 900; letter-spacing: 1.700px; line-height: 30px; font-size: 20px; }
.side-rule { border: 0; height: 1px; background: rgba(255,255,255,.16); margin: 16px 0 0; }
.item { display: flex; align-items: center; height: 70px; font-size: 17px; letter-spacing: .3px; color: rgba(255,255,255,.8); }
.item svg { fill: rgba(255,255,255,.3); height: 17px; margin-right: 10px; }
.item span { margin-top: -1px; }
.i448 { width: 15px; } .i512 { width: 17px; } .i576 { width: 19px; } .i640 { width: 21.500px; }
.wide-icon .i576 { margin: 0 12px 0 1px; }
.item .chev { fill: rgba(255,255,255,.5); width: 10px; height: 20px; margin-left: auto; margin-right: 5px; }
.item.active { color: #fff; font-weight: 700; letter-spacing: .55px; }
.item.active svg { fill: #fff; }
.side-heading { font-size: 13px; line-height: 18px; height: 19px; font-weight: 900; color: rgba(255,255,255,.4); letter-spacing: .1px; }

.main { flex: 1; overflow: hidden; background: #f8f9fc; display: flex; flex-direction: column; }
.topbar { flex: none; height: 88px; background: #fff; box-shadow: 0 3px 35px rgba(58,59,69,.15); display: flex; align-items: center; justify-content: flex-end; padding-right: 35px; }
.topbar-divider { width: 1px; height: 48px; background: #e3e6f0; }
.username { margin: -2px 10px 0 34px; font-size: 16px; letter-spacing: .18px; }
.content { width: 1200px; margin: 0 auto; padding-top: 54px; }
.page-head { display: flex; align-items: center; justify-content: space-between; height: 48px; }
h1 { font-size: 40px; line-height: 48px; letter-spacing: 1.2px; }
.date-badge { background: #4e73df; color: #fff; font-size: 15px; font-weight: 700; letter-spacing: .2px; line-height: 34px; height: 35px; padding: 0 10px; border-radius: 7px; }
.card { margin-top: 31px; height: 900px; background: #fff; border: 1px solid #e3e6f0; border-radius: 7px; box-shadow: 0 3px 35px rgba(58,59,69,.15); }
.card-header { height: 65px; padding: 16px 25px 14px; background: #f8f9fc; border-bottom: 1px solid #e3e6f0; border-radius: 7px 7px 0 0; color: #4e73df; font-size: 20px; font-weight: 700; letter-spacing: .7px; }
.card-body { padding: 23px 25px; }
.fields { display: grid; grid-template-columns: repeat(3, 1fr); gap: 30px; letter-spacing: .28px; }
.fields label { display: block; }
.input { display: block; height: 47px; margin-top: 12px; padding: 0 15px; line-height: 43px; border: 1px solid #d1d3e2; border-radius: 7px; color: #6e707e; letter-spacing: .35px; }
.readonly { background: #eaecf4; }
.inv { letter-spacing: .25px; }
.placeholder { color: #858796; }
h5 { font-size: 25px; line-height: 30px; letter-spacing: .5px; margin: 49px 0 21px; }
.search { height: 48px; border: 1px solid #ddd; border-radius: 5px; padding: 0 12.500px; line-height: 44px; letter-spacing: .25px; }
.products { display: grid; grid-template-columns: repeat(4, 1fr); gap: 37px 19px; margin-top: 20px; }
.product { height: 251px; border: 1px solid #ddd; border-radius: 10px; padding: 13px 18.500px; letter-spacing: .33px; }
.product:nth-child(n+5) { padding-top: 14px; }
.product .type { margin-top: 7px; }
.product .price { margin-top: 5px; font-weight: 700; letter-spacing: .5px; }
.product .stock { margin-top: 20px; }
.product button { display: block; margin-top: 22px; height: 43px; padding: 0 13px 3px; border-radius: 4px; background: #4e73df; color: #fff; letter-spacing: .4px; }

.scrollbar { flex: none; width: 21px; background: #f1f1f1; display: flex; flex-direction: column; align-items: center; padding: 9px 0; }
.thumb { width: 17px; height: 443px; background: #c1c1c1; margin: 7px 0 auto; }

/* taskbar */
.taskbar { flex: none; height: 50px; display: flex; background: linear-gradient(90deg, #d3e1ea 0, #d3e6e9 45%, #d3e1e8 57%, #d3dfe8 72%, #dadeda 77%, #d4e0e6 80%, #cfe0e6 100%); color: #111; font-family: "Open Sans", sans-serif; }
.start { width: 60px; display: flex; align-items: center; justify-content: center; }
.task-search { width: 360px; background: #fff; border: 1px solid #c5cbce; display: flex; align-items: center; padding-left: 14px; }
.task-search span { font-size: 18px; letter-spacing: -.1px; margin-left: 13px; white-space: nowrap; }
.task-search .art { margin-left: auto; }
.cortana { width: 60px; margin-right: 3px; display: flex; align-items: center; justify-content: center; }
.cortana span { width: 19px; height: 19px; border: 3px solid #000; border-radius: 50%; }
.apps { display: flex; }
.app { position: relative; width: 62px; display: flex; align-items: center; justify-content: center; }
.app.running::after { content: ""; position: absolute; left: 6px; right: 5px; bottom: 0; height: 3px; background: #0078d7; }
.app.stacked::after { left: 6px; right: 4px; background: linear-gradient(90deg, #0078d7 41px, #67abe1 41px); }
.app.focused { background: linear-gradient(90deg, transparent 1px, #eef4f7 1px, #eef4f7 57px, #b7c6cd 57px, #b7c6cd 58px, #e4edf1 58px, #e4edf1 61px, transparent 61px); }
.app.focused::after { left: 1px; right: 1px; background: linear-gradient(90deg, #0078d7 57px, #67abe1 57px); }
.pin { position: absolute; left: 29px; top: 22px; width: 19px; height: 19px; border-radius: 50%; color: #fff; text-align: center; font-size: 12px; line-height: 19px; }
.orange { background: #ea6a05; }
.red { background: #ed4f52; letter-spacing: -.5px; }
.tray { margin-left: auto; display: flex; align-items: center; gap: 9px; }
.tray svg:nth-child(2) { margin: 0 -2px 0 2px; }
.clock { display: flex; flex-direction: column; align-items: center; width: 76px; margin-left: 7px; font-size: 15px; line-height: 23px; letter-spacing: -.35px; padding-top: 2px; }
.notify { position: relative; width: 40px; display: flex; align-items: center; justify-content: center; margin-left: 10px; }
.notify svg { margin-right: 2px; }
.count { position: absolute; left: 19px; top: 24px; width: 21px; height: 21px; border-radius: 50%; border: 1px solid #777; background: #d1d6d8; font-size: 14px; line-height: 19px; text-align: center; }
.show-desktop { width: 1px; background: #9fb0b8; margin: 0 5px 0 14px; }
```
FILE: tabs.js
```js
const wide = `globe figma github facebook tiktok gpt gpt gpt gpt gpt gpt quora java gmail purple badge
  huawei aa huawei wave huawei github google docs drive bili bili ninja xshape github youtube swirl docs
  meet drive github gpt gpt github sheet badge badge drive docs badge pma docs github github google whale whale`;
const narrow = 'whale github figma badge github badge github canva drive stripes github github';

// Favicons made of lettering are plain text; the others come from the symbol sheet.
const lettered = {
  aa: '<span class="tab-aa">aa</span>',
  pma: '<span class="tab-pma"><svg><use href="#sails"/></svg>PMA</span>',
};

function fill(id, names) {
  document.getElementById(id).innerHTML = names.trim().split(/\s+/)
    .map(name => `<div class="tab">${lettered[name] || `<svg><use href="#${name}"/></svg>`}</div>`).join('');
}

fill('tabs-wide', wide);
fill('tabs-narrow', narrow);
fill('tabs-after', 'flagb flagk');
```
